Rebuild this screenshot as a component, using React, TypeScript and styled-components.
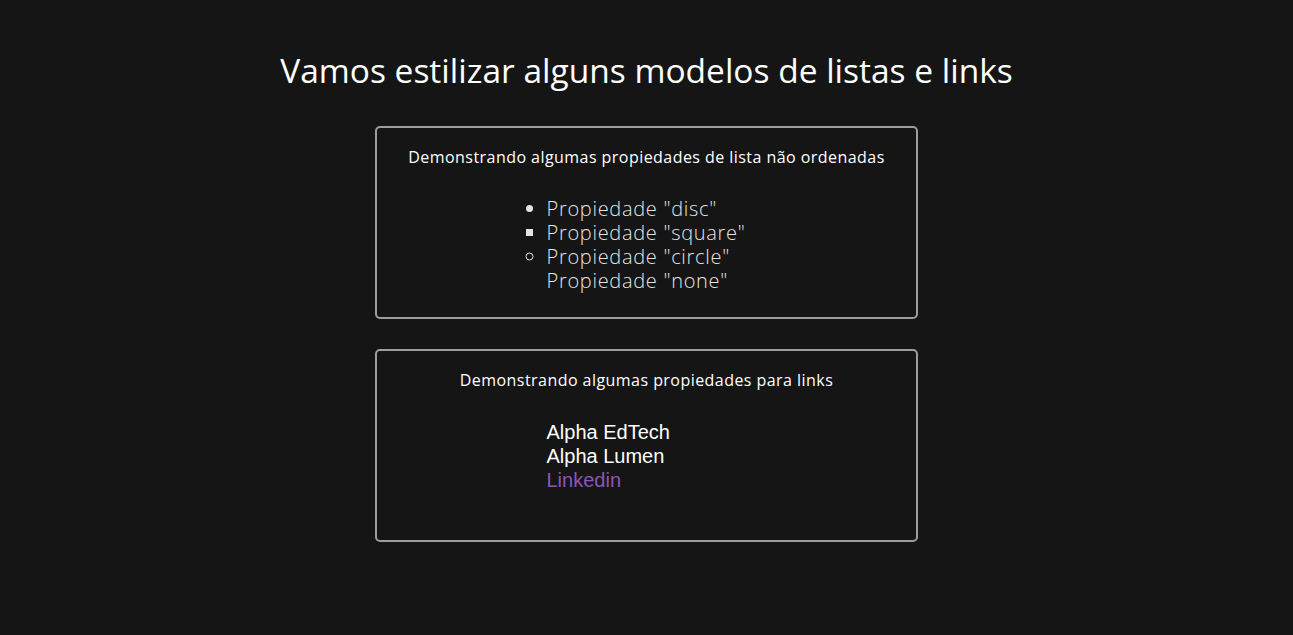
import React from "react";
import styled, { createGlobalStyle } from "styled-components";

const Global = createGlobalStyle`
  html, body { margin: 0; padding: 0; background: #151515; }
  body { font-family: "Open Sans", "Noto Sans", sans-serif; color: #fff; }
`;

const Page = styled.main`
  display: flex;
  flex-direction: column;
  align-items: center;
  padding-top: 49px;
`;

const Title = styled.h1`
  margin: 0 0 35px;
  font-family: "Open Sans", sans-serif;
  font-weight: 400;
  font-size: 33.5px;
  line-height: 42px;
  color: #fff;
`;

const Card = styled.section<{ $gap?: number }>`
  box-sizing: border-box;
  width: 543px;
  height: 193px;
  margin-bottom: ${(p) => p.$gap ?? 0}px;
  border: 2px solid #9d9d9d;
  border-radius: 5px;
  padding-top: 19px;
  display: flex;
  flex-direction: column;
  align-items: center;
`;

const CardTitle = styled.h2`
  margin: 0 0 30px;
  font-family: "Open Sans", sans-serif;
  font-weight: 400;
  font-size: 16px;
  line-height: 20px;
  letter-spacing: 0.45px;
  color: #fff;
`;

const List = styled.ul`
  width: 200px;
  margin: 0;
  padding: 0;
  font-family: "Open Sans", sans-serif;
  font-weight: 300;
  font-size: 20px;
  line-height: 24px;
  letter-spacing: 0.7px;
  color: #e4e4e4;
`;

const Item = styled.li<{ $type: string }>`
  list-style-type: ${(p) => p.$type};
`;

const LinkList = styled.ul`
  width: 200px;
  margin: 0;
  padding: 0;
  list-style: none;
  font-family: "Liberation Sans", Arial, sans-serif;
  font-size: 20px;
  line-height: 24px;
`;

const Link = styled.a<{ $visited?: boolean }>`
  color: ${(p) => (p.$visited ? "#8c55b6" : "#ffffff")};
  text-decoration: none;
`;

export default function App() {
  return (
    <>
      <Global />
      <Page>
        <Title>Vamos estilizar alguns modelos de listas e links</Title>
        <Card $gap={30}>
          <CardTitle>Demonstrando algumas propiedades de lista não ordenadas</CardTitle>
          <List>
            <Item $type="disc">Propiedade "disc"</Item>
            <Item $type="square">Propiedade "square"</Item>
            <Item $type="circle">Propiedade "circle"</Item>
            <Item $type="none">Propiedade "none"</Item>
          </List>
        </Card>
        <Card>
          <CardTitle>Demonstrando algumas propiedades para links</CardTitle>
          <LinkList>
            <li><Link href="#edtech">Alpha EdTech</Link></li>
            <li><Link href="#lumen">Alpha Lumen</Link></li>
            <li><Link href="#linkedin" $visited>Linkedin</Link></li>
          </LinkList>
        </Card>
      </Page>
    </>
  );
}
